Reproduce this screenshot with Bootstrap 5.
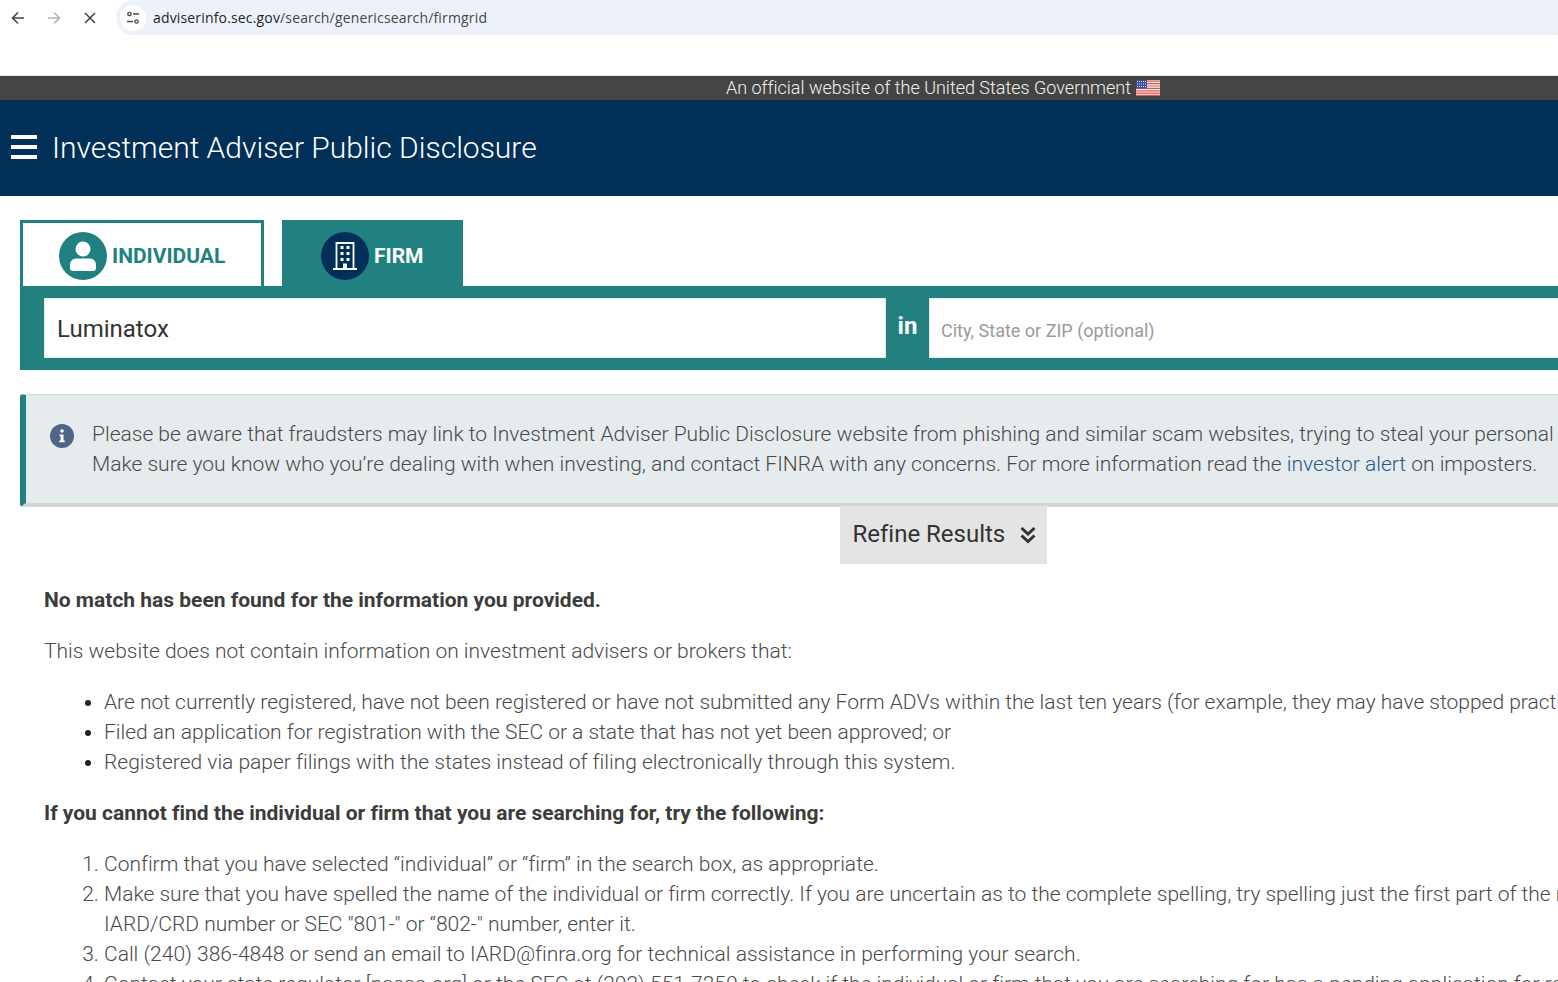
<!DOCTYPE html>
<html lang="en">

<head>
    <meta charset="UTF-8">
    <meta name="viewport" content="width=device-width, initial-scale=1.0">
    <title>Investment Adviser Public Disclosure</title>
    <link href="https://cdn.jsdelivr.net/npm/bootstrap@5.3.0/dist/css/bootstrap.min.css" rel="stylesheet">
    <style>
        html,
        body {
            height: 982px;
            overflow: hidden;
            background: #fff;
        }

        body {
            font-family: Roboto, "Liberation Sans", sans-serif;
            font-weight: 300;
            font-size: 21px;
            line-height: 30px;
            letter-spacing: -.006px;
            color: #4a4a4a;
        }

        .page-wrap {
            width: 1886px;
        }

        /* browser chrome */
        .chrome-bar {
            height: 76px;
            padding-left: 8px;
            border-bottom: 1px solid #e8e8e8;
        }

        .chrome-row {
            height: 35px;
        }

        .chrome-btn {
            width: 20px;
            height: 20px;
            margin-right: 16px;
        }

        .url-pill {
            width: 1770px;
            height: 35px;
            margin-left: 0;
            background: #edf2fa;
            border-radius: 18px;
            padding-left: 4px;
            font-family: "Open Sans", "Noto Sans", sans-serif;
            font-weight: 400;
            font-size: 14px;
            letter-spacing: .16px;
            color: #1f1f1f;
        }

        .url-tune {
            width: 26px;
            height: 26px;
            background: #fff;
            border-radius: 50%;
            margin-right: 7px;
        }

        .url-path {
            color: #474747;
        }

        /* site header */
        .gov-banner {
            height: 24px;
            background: #444;
            color: #f2f2f2;
            font-size: 18px;
            line-height: 24px;
        }

        .gov-banner svg {
            margin-left: 5px;
        }

        .site-head {
            height: 96px;
            background: #003057;
            color: #fff;
            padding-left: 11px;
            font-size: 30px;
        }

        .burger {
            width: 26px;
            margin-right: 16px;
            padding-bottom: 2px;
        }

        .burger span {
            display: block;
            height: 4px;
            background: #fff;
            margin: 6px 0;
        }

        .site-title {
            margin-left: -1px;
        }

        /* search tabs */
        .search-area {
            padding: 24px 0 0 20px;
        }

        .tab-item {
            height: 66px;
            font-weight: 700;
            font-size: 21px;
        }

        .tab-ind {
            width: 244px;
            border: 3px solid #218181;
            border-bottom: 0;
            color: #218181;
            margin-right: 18px;
            padding: 3px 0 0 36px;
        }

        .tab-firm {
            width: 181px;
            background: #218181;
            color: #fff;
            padding: 6px 0 0 39px;
        }

        .tab-disc {
            width: 48px;
            height: 48px;
            border-radius: 50%;
            margin-right: 5px;
        }

        .tab-ind .tab-disc {
            background: #218181;
        }

        .tab-firm .tab-disc {
            background: #003057;
        }

        .search-bar {
            height: 84px;
            background: #218181;
            padding: 12px 24px;
        }

        .search-field {
            height: 60px;
            border: 1px solid #e8e8e8;
            border-radius: 0;
            font-family: Roboto, sans-serif;
            font-weight: 400;
        }

        .field-name {
            width: 842px;
            font-size: 24px;
            color: #333;
            padding: 2px 12px 0;
        }

        .field-place {
            flex: 1;
            font-size: 18px;
            padding: 4px 11px 0;
        }

        .field-place::placeholder {
            color: #9a9a9a;
            opacity: 1;
        }

        .in-label {
            width: 43px;
            color: #fff;
            font-weight: 700;
            font-size: 24px;
            text-align: center;
            padding-bottom: 4px;
        }

        /* notice */
        .scam-note {
            margin: 24px 0 0 20px;
            height: 113px;
            background: #e6ecee;
            border-left: 6px solid #218181;
            border-top: 1px solid #d3dadd;
            border-bottom: 4px solid #d4d6d6;
            border-radius: 3px 0 0 3px;
            padding: 24px 0 0 24px;
        }

        .note-icon {
            width: 24px;
            height: 24px;
            margin: 5px 18px 0 0;
        }

        .note-body a {
            color: #27598a;
            text-decoration: none;
        }

        .refine-btn {
            width: 207px;
            height: 58px;
            margin-top: -1px;
            background: #e4e4e4;
            font-weight: 400;
            font-size: 24px;
            color: #333;
            padding: 0 0 2px 13px;
            position: relative;
        }

        .refine-btn svg {
            margin: 2px 0 0 15px;
        }

        /* results */
        .result-text {
            padding: 21px 0 0 44px;
        }

        .result-text p {
            margin: 0 0 21px;
        }

        .result-head {
            font-weight: 700;
            color: #3c3c3c;
        }

        .result-text ul,
        .result-text ol {
            margin: 0 0 21px;
            padding-left: 60px;
        }

        .result-text ul li::marker {
            color: #222;
        }
    </style>
</head>

<body>
    <div class="page-wrap">
        <!-- Browser bar -->
        <div class="chrome-bar">
            <div class="chrome-row d-flex align-items-center">
                <svg class="chrome-btn" viewBox="0 0 20 20" fill="none" stroke="#474747" stroke-width="1.6">
                    <path d="M16 10H4.5M10 4.5 4.5 10l5.5 5.5" />
                </svg>
                <svg class="chrome-btn" viewBox="0 0 20 20" fill="none" stroke="#b4b4b4" stroke-width="1.6">
                    <path d="M4 10h11.5M10 4.5l5.500 5.500-5.500 5.500" />
                </svg>
                <svg class="chrome-btn" viewBox="0 0 20 20" fill="none" stroke="#474747" stroke-width="1.6">
                    <path d="M5 5l10 10M15 5 5 15" />
                </svg>
                <div class="url-pill d-flex align-items-center">
                    <span class="url-tune d-flex align-items-center justify-content-center">
                        <svg width="16" height="16" viewBox="0 0 16 16" fill="none" stroke="#474747" stroke-width="1.300">
                            <circle cx="4.500" cy="4" r="1.700" />
                            <path d="M8 4h6M2 11.500h6" />
                            <circle cx="11.500" cy="11.500" r="1.700" />
                        </svg>
                    </span>
                    <span>adviserinfo.sec.gov<span class="url-path">/search/genericsearch/firmgrid</span></span>
                </div>
            </div>
        </div>

        <!-- Site header -->
        <div class="gov-banner d-flex align-items-center justify-content-center">
            An official website of the United States Government
            <svg width="24" height="16" viewBox="0 0 24 16">
                <rect width="24" height="16" fill="#f5f5f5" />
                <path d="M0 1.200h24M0 3.600h24M0 6h24M0 8.400h24M0 10.800h24M0 13.200h24M0 15.400h24" stroke="#e0574f" stroke-width="1.200" />
                <rect width="11" height="8.500" fill="#3b4a9c" />
                <path d="M1 1.500h9M1 4h9M1 6.500h9" stroke="#dfe3f5" stroke-width="1" stroke-dasharray="1 1" />
            </svg>
        </div>
        <div class="site-head d-flex align-items-center">
            <div class="burger"><span></span><span></span><span></span></div>
            <span class="site-title">Investment Adviser Public Disclosure</span>
        </div>

        <!-- Search -->
        <div class="search-area">
            <div class="d-flex">
                <div class="tab-item tab-ind d-flex align-items-center">
                    <span class="tab-disc d-flex align-items-center justify-content-center">
                        <svg width="28" height="32" viewBox="0 0 28 32" fill="#fff">
                            <circle cx="14" cy="9" r="7.500" />
                            <path d="M7 18.500h14a6 6 0 0 1 6 6V28a3 3 0 0 1-3 3H4a3 3 0 0 1-3-3v-3.500a6 6 0 0 1 6-6z" />
                        </svg>
                    </span>
                    <span>INDIVIDUAL</span>
                </div>
                <div class="tab-item tab-firm d-flex align-items-center">
                    <span class="tab-disc d-flex align-items-center justify-content-center">
                        <svg width="26" height="30" viewBox="0 0 26 30">
                            <path d="M4.500 27.500V2h17v25.500" fill="none" stroke="#fff" stroke-width="1.800" />
                            <path d="M1 28h24" stroke="#fff" stroke-width="2" />
                            <path d="M8.500 5h3v3h-3zm6 0h3v3h-3zm-6 6h3v3h-3zm6 0h3v3h-3zm-6 6h3v3h-3zm6 0h3v3h-3zM11 22.500h4V28h-4z" fill="#fff" />
                        </svg>
                    </span>
                    <span>FIRM</span>
                </div>
            </div>
            <div class="search-bar d-flex align-items-center">
                <input class="form-control search-field field-name" type="text" value="Luminatox">
                <span class="in-label">in</span>
                <input class="form-control search-field field-place" type="text" placeholder="City, State or ZIP (optional)">
            </div>
        </div>

        <!-- Scam notice -->
        <div class="scam-note d-flex">
            <svg class="note-icon flex-shrink-0" viewBox="0 0 24 24">
                <circle cx="12" cy="12" r="12" fill="#4f6488" />
                <circle cx="12" cy="7" r="1.800" fill="#fff" />
                <path d="M9.500 10.500h4v6h1.200v1.800H9.300v-1.800h1.300v-4.200H9.500z" fill="#fff" />
            </svg>
            <div class="note-body">
                Please be aware that fraudsters may link to Investment Adviser Public Disclosure website from phishing and similar scam websites, trying to steal your personal information.<br>
                Make sure you know who you’re dealing with when investing, and contact FINRA with any concerns. For more information read the <a href="#">investor alert</a> on imposters.
            </div>
        </div>
        <div class="d-flex justify-content-center">
            <div class="refine-btn d-flex align-items-center">
                Refine Results
                <svg width="16" height="18" viewBox="0 0 16 18" fill="none" stroke="#333" stroke-width="3">
                    <path d="M1.500 2 8 8l6.500-6M1.500 9.500 8 15.500l6.500-6" />
                </svg>
            </div>
        </div>

        <!-- Results -->
        <div class="result-text">
            <p class="result-head">No match has been found for the information you provided.</p>
            <p>This website does not contain information on investment advisers or brokers that:</p>
            <ul>
                <li>Are not currently registered, have not been registered or have not submitted any Form ADVs within the last ten years (for example, they may have stopped practicing);</li>
                <li>Filed an application for registration with the SEC or a state that has not yet been approved; or</li>
                <li>Registered via paper filings with the states instead of filing electronically through this system.</li>
            </ul>
            <p class="result-head">If you cannot find the individual or firm that you are searching for, try the following:</p>
            <ol>
                <li>Confirm that you have selected “individual” or “firm” in the search box, as appropriate.</li>
                <li>Make sure that you have spelled the name of the individual or firm correctly. If you are uncertain as to the complete spelling, try spelling just the first part of the name. If you have an<br>IARD/CRD number or SEC "801-" or “802-" number, enter it.</li>
                <li>Call (240) 386-4848 or send an email to IARD@finra.org for technical assistance in performing your search.</li>
                <li>Contact your state regulator [nasaa.org] or the SEC at (202) 551-7250 to check if the individual or firm that you are searching for has a pending application for registration.</li>
            </ol>
        </div>
    </div>

    <script src="https://cdn.jsdelivr.net/npm/bootstrap@5.3.0/dist/js/bootstrap.bundle.min.js"></script>
</body>

</html>
